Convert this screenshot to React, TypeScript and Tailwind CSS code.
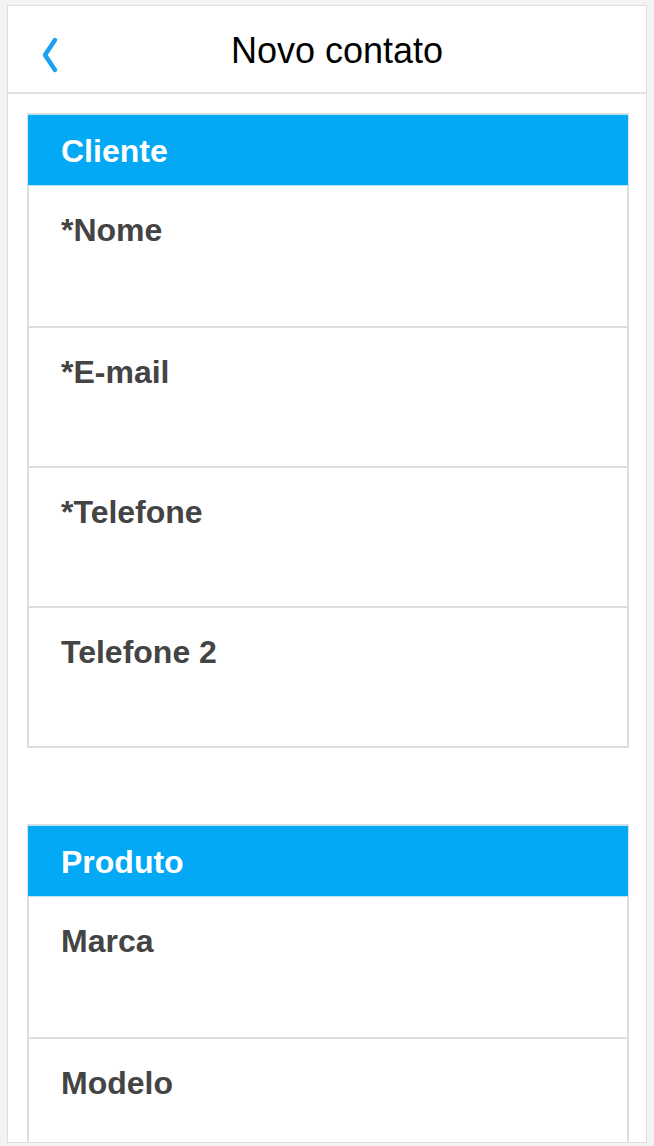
const cliente = ["*Nome", "*E-mail", "*Telefone", "Telefone 2"]
const produto = ["Marca", "Modelo"]

function Section({ title, fields }: { title: string; fields: string[] }) {
  return (
    <div className="border-2 border-[#dedede]">
      <div className="h-[72px] -mx-[1px] -mt-[1px] bg-[#03a9f4] border-t border-b border-[#b9e4f8] flex items-center pl-[33px]">
        <span className="text-white text-[32px] font-bold pt-[2px]">{title}</span>
      </div>
      {fields.map((f, i) => (
        <div
          key={f}
          className={`h-[140px] pl-[32px] pt-[25px] ${i > 0 ? "border-t-2 border-[#dedede]" : ""}`}
        >
          <span className="text-[#444444] text-[32px] font-bold leading-[38px]">{f}</span>
        </div>
      ))}
    </div>
  )
}

export default function App() {
  return (
    <div
      className="w-[654px] h-[1146px] bg-[#f3f3f3] pt-[5px] px-[7px]"
      style={{ fontFamily: '"Liberation Sans", Arial, sans-serif' }}
    >
      <div className="h-[1138px] bg-white border border-[#dddddd] overflow-hidden">
        <div className="h-[88px] border-b-2 border-[#e2e2e2] flex items-center relative">
          <svg className="absolute left-[30px] top-[27px]" width="26" height="42" viewBox="0 0 26 42">
            <path d="M17 7 L7 22 L17 37" fill="none" stroke="#1ba1f0" strokeWidth="4.5" strokeLinecap="round" strokeLinejoin="round" />
          </svg>
          <div className="flex-1 text-center pl-[20px] pt-[4px] text-black text-[36px]">Novo contato</div>
        </div>
        <div className="pt-[19px] pl-[19px] pr-[17px] flex flex-col gap-[76px]">
          <Section title="Cliente" fields={cliente} />
          <Section title="Produto" fields={produto} />
        </div>
      </div>
    </div>
  )
}
